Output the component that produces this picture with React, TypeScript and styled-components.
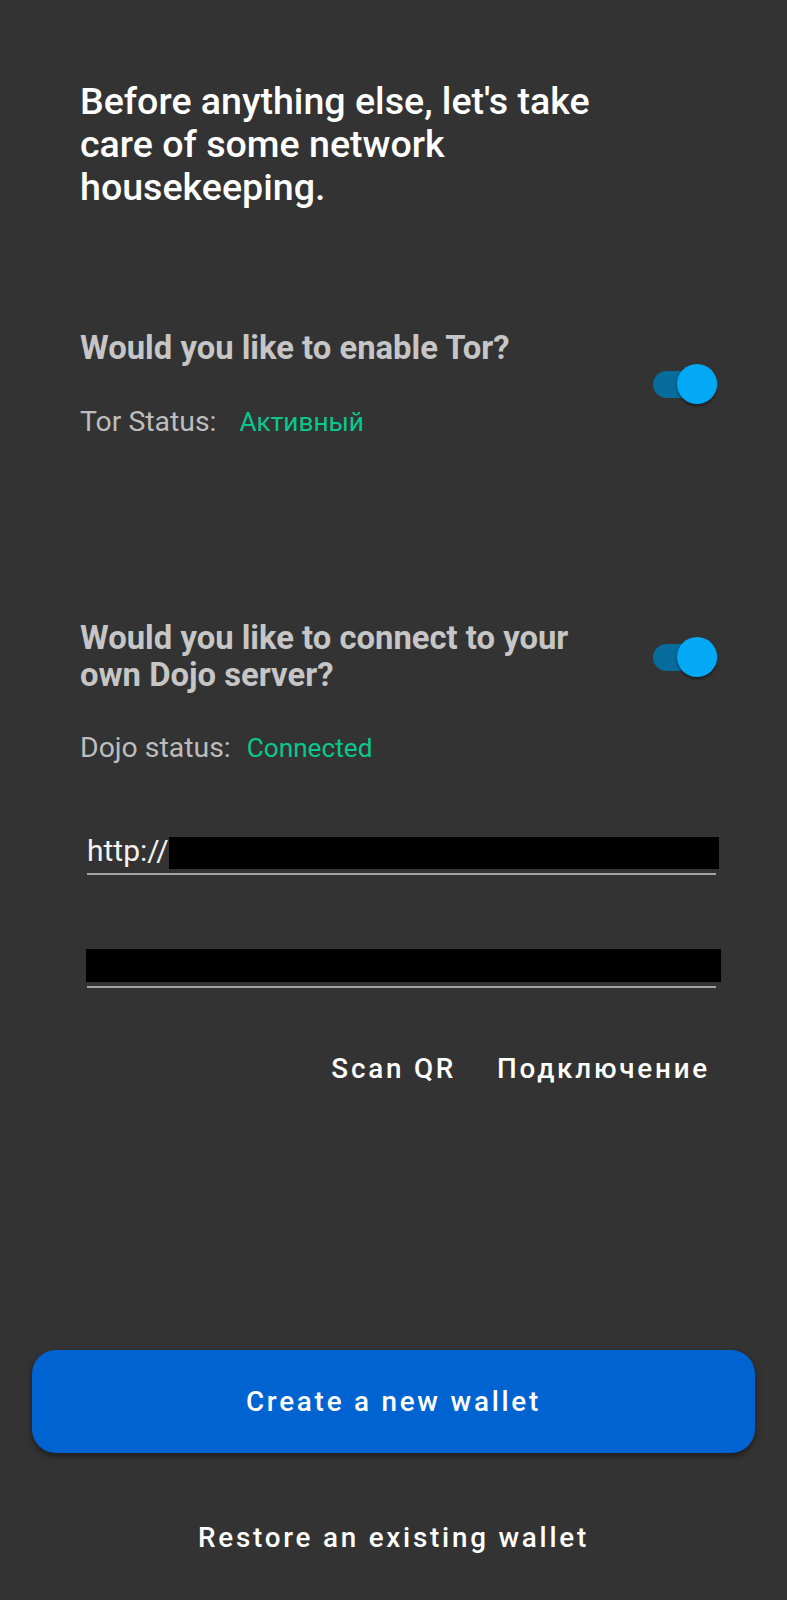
import React from "react";
import styled, { createGlobalStyle } from "styled-components";

const GlobalStyle = createGlobalStyle`
  html, body {
    margin: 0;
    padding: 0;
    background: #333333;
  }
  body {
    font-family: Roboto, "Noto Sans", "Liberation Sans", sans-serif;
    -webkit-font-smoothing: antialiased;
  }
  * { box-sizing: border-box; }
`;

const Page = styled.div`
  width: 787px;
  min-height: 1600px;
  background: #333333;
  display: flex;
  flex-direction: column;
  padding-top: 80px;
`;

const Section = styled.div`
  display: flex;
  flex-direction: column;
  padding: 0 69px 0 80px;
`;

const Title = styled.h1`
  margin: 0;
  max-width: 570px;
  color: #ffffff;
  font-size: 37.6px;
  line-height: 43px;
  font-weight: 500;
`;

const SettingRow = styled.div<{ $top: number }>`
  display: flex;
  align-items: center;
  justify-content: space-between;
  margin-top: ${(p) => p.$top}px;
`;

const Column = styled.div`
  display: flex;
  flex-direction: column;
`;

const Question = styled.div<{ $max?: number }>`
  color: #c6c6c6;
  font-size: 32.8px;
  line-height: 37px;
  font-weight: 700;
  max-width: ${(p) => (p.$max ? `${p.$max}px` : "none")};
`;

const StatusLine = styled.div<{ $top: number; $gap: number }>`
  display: flex;
  align-items: baseline;
  gap: ${(p) => p.$gap}px;
  margin-top: ${(p) => p.$top}px;
  font-size: 28.4px;
  line-height: 32px;
`;

const StatusLabel = styled.span`
  color: #bdbdbd;
`;

const StatusValue = styled.span`
  color: #08c98d;
  font-size: 26.2px;
`;

const Switch = styled.div`
  position: relative;
  width: 65px;
  height: 40px;
  flex-shrink: 0;
  display: flex;
  align-items: center;
`;

const Track = styled.div`
  width: 65px;
  height: 27px;
  border-radius: 14px;
  background: #066c9c;
`;

const Thumb = styled.div`
  position: absolute;
  right: 1px;
  top: 0;
  width: 40px;
  height: 40px;
  border-radius: 50%;
  background: #03a9f4;
  box-shadow: 0 2px 3px rgba(0, 0, 0, 0.45);
`;

const Field = styled.div<{ $top: number }>`
  display: flex;
  align-items: flex-start;
  margin: ${(p) => p.$top}px 2px 0 7px;
  padding-bottom: 4px;
  border-bottom: 2px solid #a3a3a3;
  font-size: 30px;
  line-height: 34px;
  color: #f2f2f2;
`;

const Redaction = styled.div<{ $mt: number; $h: number; $ml: number; $mr: number }>`
  flex: 1;
  background: #000000;
  height: ${(p) => p.$h}px;
  margin: ${(p) => p.$mt}px ${(p) => p.$mr}px 0 ${(p) => p.$ml}px;
`;

const Actions = styled.div`
  display: flex;
  justify-content: flex-end;
  gap: 25px;
  margin-top: 65px;
`;

const TextButton = styled.button`
  background: none;
  border: none;
  padding: 0 8px;
  margin: 0;
  color: #ffffff;
  font-family: inherit;
  font-size: 27.8px;
  line-height: 32px;
  font-weight: 500;
  letter-spacing: 0.1em;
`;

const Footer = styled.div`
  display: flex;
  flex-direction: column;
  align-items: center;
  padding: 0 32px;
  margin-top: 265px;
`;

const PrimaryButton = styled.button`
  width: 723px;
  height: 103px;
  border: none;
  border-radius: 24px;
  background: #0063d2;
  box-shadow: 0 3px 6px rgba(0, 0, 0, 0.45);
  color: #ffffff;
  font-family: inherit;
  font-size: 27.8px;
  line-height: 32px;
  font-weight: 500;
  letter-spacing: 0.1em;
  padding-top: 2px;
`;

const SecondaryButton = styled(TextButton)`
  margin-top: 69px;
`;

function Toggle() {
  return (
    <Switch>
      <Track />
      <Thumb />
    </Switch>
  );
}

export default function App() {
  return (
    <>
      <GlobalStyle />
      <Page>
        <Section>
          <Title>Before anything else, let's take care of some network housekeeping.</Title>

          <SettingRow $top={121}>
            <Column>
              <Question>Would you like to enable Tor?</Question>
              <StatusLine $top={39} $gap={23}>
                <StatusLabel>Tor Status:</StatusLabel>
                <StatusValue>Активный</StatusValue>
              </StatusLine>
            </Column>
            <Toggle />
          </SettingRow>

          <SettingRow $top={182}>
            <Question $max={520}>Would you like to connect to your own Dojo server?</Question>
            <Toggle />
          </SettingRow>
          <StatusLine $top={38} $gap={16}>
            <StatusLabel>Dojo status:</StatusLabel>
            <StatusValue>Connected</StatusValue>
          </StatusLine>

          <Field $top={70}>
            <span>http://</span>
            <Redaction $mt={3} $h={32} $ml={0} $mr={-3} />
          </Field>
          <Field $top={74}>
            <Redaction $mt={0} $h={33} $ml={-1} $mr={-5} />
          </Field>

          <Actions>
            <TextButton>Scan QR</TextButton>
            <TextButton>Подключение</TextButton>
          </Actions>
        </Section>

        <Footer>
          <PrimaryButton>Create a new wallet</PrimaryButton>
          <SecondaryButton>Restore an existing wallet</SecondaryButton>
        </Footer>
      </Page>
    </>
  );
}
